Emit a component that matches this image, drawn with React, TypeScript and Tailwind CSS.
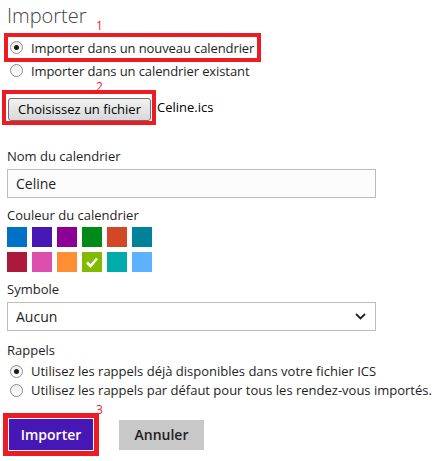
const Radio = ({ checked }: { checked?: boolean }) => (
  <span className="w-[13px] h-[13px] rounded-full border border-[#8f8f8f] bg-gradient-to-b from-[#ececec] to-white flex items-center justify-center shrink-0">
    {checked && <span className="w-[5px] h-[5px] rounded-full bg-[#1a1a1a]" />}
  </span>
);

const Mark = ({ n, className }: { n: string; className: string }) => (
  <span className={"absolute text-[12px] leading-none text-[#ed1c24] " + className}>{n}</span>
);

const colors = [
  "bg-[#0072c6]",
  "bg-[#4617b4]",
  "bg-[#8c0095]",
  "bg-[#008a17]",
  "bg-[#d24726]",
  "bg-[#008299]",
  "bg-[#ac193d]",
  "bg-[#dc4fad]",
  "bg-[#ff8f32]",
  "bg-[#82ba00]",
  "bg-[#00aba9]",
  "bg-[#5db2ff]",
];

export default function App() {
  return (
    <div className="w-[444px] h-[461px] bg-white text-[#1e1e1e] text-[13px] whitespace-nowrap flex flex-col" style={{ fontFamily: '"Open Sans", "Liberation Sans", sans-serif' }}>
      <div className="mt-[3px] ml-[7px] text-[20px] leading-[26px] font-light text-[#444]">Importer</div>

      {/* 1 */}
      <div className="relative ml-[4px] mt-[4px] w-[257px] h-[29px] border-4 border-[#ed1c24] flex items-center gap-[8px] pl-[2px]">
        <Mark n="1" className="left-[88px] -top-[17px]" />
        <Radio checked />
        <span className="leading-[18px] tracking-[-0.1px]">Importer dans un nouveau calendrier</span>
      </div>
      <div className="ml-[10px] h-[17px] flex items-center gap-[8px]">
        <Radio />
        <span className="leading-[18px] tracking-[-0.1px]">Importer dans un calendrier existant</span>
      </div>

      {/* 2 */}
      <div className="flex items-center mt-[11px]">
        <div className="relative ml-[2px] w-[154px] h-[35px] border-4 border-[#ed1c24] pt-[4px] pl-[2px]">
          <Mark n="2" className="left-[90px] -top-[13px]" />
          <div className="w-[143px] h-[23px] rounded-[3px] border border-[#707070] bg-gradient-to-b from-[#f2f2f2] to-[#d8d8d8] flex items-center justify-center text-[13px] text-black">
            Choisissez un fichier
          </div>
        </div>
        <span className="ml-[1px] text-black">Celine.ics</span>
      </div>

      <div className="ml-[7px] mt-[22px] leading-[18px]">Nom du calendrier</div>
      <div className="ml-[7px] mt-[4px] w-[369px] h-[29px] border border-[#bcbcbc] bg-[#fcfcfc] flex items-center pl-[8px] text-[14px]">
        Celine
      </div>

      <div className="ml-[7px] mt-[8px] leading-[18px]">Couleur du calendrier</div>
      <div className="ml-[7px] mt-[3px] grid grid-cols-6 w-fit gap-[5px]">
        {colors.map((c, i) => (
          <div key={i} className={"w-[20px] h-[20px] flex items-center justify-center " + c}>
            {i === 9 && (
              <svg width="14" height="12" viewBox="0 0 14 12">
                <path d="M2 6.5 L5.5 10 L12 2.5" fill="none" stroke="white" strokeWidth="2.6" />
              </svg>
            )}
          </div>
        ))}
      </div>

      <div className="ml-[7px] mt-[8px] leading-[18px]">Symbole</div>
      <div className="ml-[7px] mt-[4px] w-[369px] h-[29px] border border-[#bcbcbc] bg-white flex items-center justify-between pl-[8px] pr-[9px] text-[14px]">
        <span>Aucun</span>
        <svg width="11" height="7" viewBox="0 0 11 7">
          <path d="M1 1 L5.5 5.5 L10 1" fill="none" stroke="#222" strokeWidth="1.8" />
        </svg>
      </div>

      <div className="ml-[7px] mt-[10px] leading-[18px]">Rappels</div>
      <div className="ml-[10px] mt-[3px] h-[19px] flex items-center gap-[8px]">
        <Radio checked />
        <span>Utilisez les rappels déjà disponibles dans votre fichier ICS</span>
      </div>
      <div className="ml-[10px] h-[19px] flex items-center gap-[8px]">
        <Radio />
        <span>Utilisez les rappels par défaut pour tous les rendez-vous importés.</span>
      </div>

      {/* 3 */}
      <div className="flex items-center mt-[13px]">
        <div className="relative ml-[3px] w-[96px] h-[43px] border-[5px] border-[#ed1c24] bg-white p-px">
          <Mark n="3" className="left-[88px] -top-[14px]" />
          <div className="w-full h-full bg-[#4617b4] text-white font-semibold text-[14px] flex items-center justify-center">
            Importer
          </div>
        </div>
        <div className="ml-[20px] w-[85px] h-[30px] bg-[#c8c8c8] text-[#222] font-semibold text-[14px] flex items-center justify-center">
          Annuler
        </div>
      </div>
    </div>
  );
}
